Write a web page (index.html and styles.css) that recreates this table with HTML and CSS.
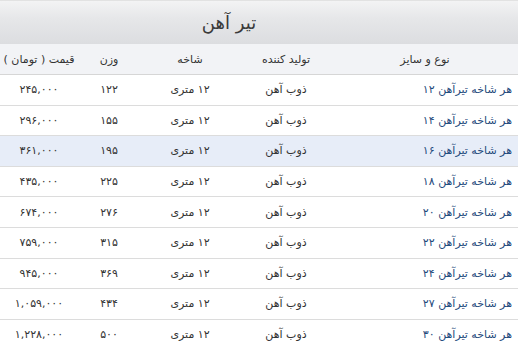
FILE: index.html
```html
<!DOCTYPE html>
<html lang="fa" dir="rtl">
<head>
<meta charset="utf-8">
<link rel="stylesheet" href="styles.css">
</head>
<body>
<div class="panel">
  <div class="title"><span>تیر آهن</span></div>
  <table class="grid">
    <colgroup>
      <col class="c-type"><col class="c-prod"><col class="c-len"><col class="c-wt"><col class="c-price">
    </colgroup>
    <thead>
      <tr><th>نوع و سایز</th><th>تولید کننده</th><th>شاخه</th><th>وزن</th><th>قیمت ( تومان )</th></tr>
    </thead>
    <tbody>
      <tr><td class="type">هر شاخه تیرآهن ۱۲</td><td>ذوب آهن</td><td>۱۲ متری</td><td>۱۲۲</td><td>۲۴۵,۰۰۰</td></tr>
      <tr><td class="type">هر شاخه تیرآهن ۱۴</td><td>ذوب آهن</td><td>۱۲ متری</td><td>۱۵۵</td><td>۲۹۶,۰۰۰</td></tr>
      <tr class="hl"><td class="type">هر شاخه تیرآهن ۱۶</td><td>ذوب آهن</td><td>۱۲ متری</td><td>۱۹۵</td><td>۳۶۱,۰۰۰</td></tr>
      <tr><td class="type">هر شاخه تیرآهن ۱۸</td><td>ذوب آهن</td><td>۱۲ متری</td><td>۲۲۵</td><td>۴۳۵,۰۰۰</td></tr>
      <tr><td class="type">هر شاخه تیرآهن ۲۰</td><td>ذوب آهن</td><td>۱۲ متری</td><td>۲۷۶</td><td>۶۷۴,۰۰۰</td></tr>
      <tr><td class="type">هر شاخه تیرآهن ۲۲</td><td>ذوب آهن</td><td>۱۲ متری</td><td>۳۱۵</td><td>۷۵۹,۰۰۰</td></tr>
      <tr><td class="type">هر شاخه تیرآهن ۲۴</td><td>ذوب آهن</td><td>۱۲ متری</td><td>۳۶۹</td><td>۹۴۵,۰۰۰</td></tr>
      <tr><td class="type">هر شاخه تیرآهن ۲۷</td><td>ذوب آهن</td><td>۱۲ متری</td><td>۴۳۴</td><td>۱,۰۵۹,۰۰۰</td></tr>
      <tr><td class="type">هر شاخه تیرآهن ۳۰</td><td>ذوب آهن</td><td>۱۲ متری</td><td>۵۰۰</td><td>۱,۲۲۸,۰۰۰</td></tr>
    </tbody>
  </table>
</div>
</body>
</html>
```
FILE: styles.css
```css
html, body {
  margin: 0;
  padding: 0;
  background: #ffffff;
}
body {
  font-family: Tahoma, "DejaVu Sans", sans-serif;
  font-size: 11px;
  color: #333333;
  width: 518px;
  overflow: hidden;
}
.panel {
  width: 518px;
}
.title {
  height: 44px;
  display: flex;
  align-items: center;
  justify-content: center;
  padding-right: 60px;
  background: linear-gradient(#f3f3f4 0%, #e6e7e9 40%, #dcdde0 100%);
  border-top: 1px solid #e2e2e2;
  box-sizing: border-box;
}
.title span {
  font-size: 18px;
  color: #3a3a3a;
}
.grid {
  width: 518px;
  border-collapse: collapse;
  table-layout: fixed;
}
.c-type { width: 186px; }
.c-prod { width: 92px; }
.c-len { width: 100px; }
.c-wt { width: 62px; }
.c-price { width: 78px; }
.grid th {
  height: 30px;
  font-weight: normal;
  background: #f2f3f6;
  color: #333;
  border-bottom: 1px solid #d6d6d6;
  text-align: center;
  padding: 0;
  white-space: nowrap;
}
.grid td {
  height: 29.6px;
  text-align: center;
  border-bottom: 1px solid #dcdcdc;
  padding: 0;
  white-space: nowrap;
}
.grid td.type {
  text-align: right;
  padding-right: 6px;
  color: #1f4a7c;
}
.grid tr.hl td {
  background: #e7edf8;
}
```
